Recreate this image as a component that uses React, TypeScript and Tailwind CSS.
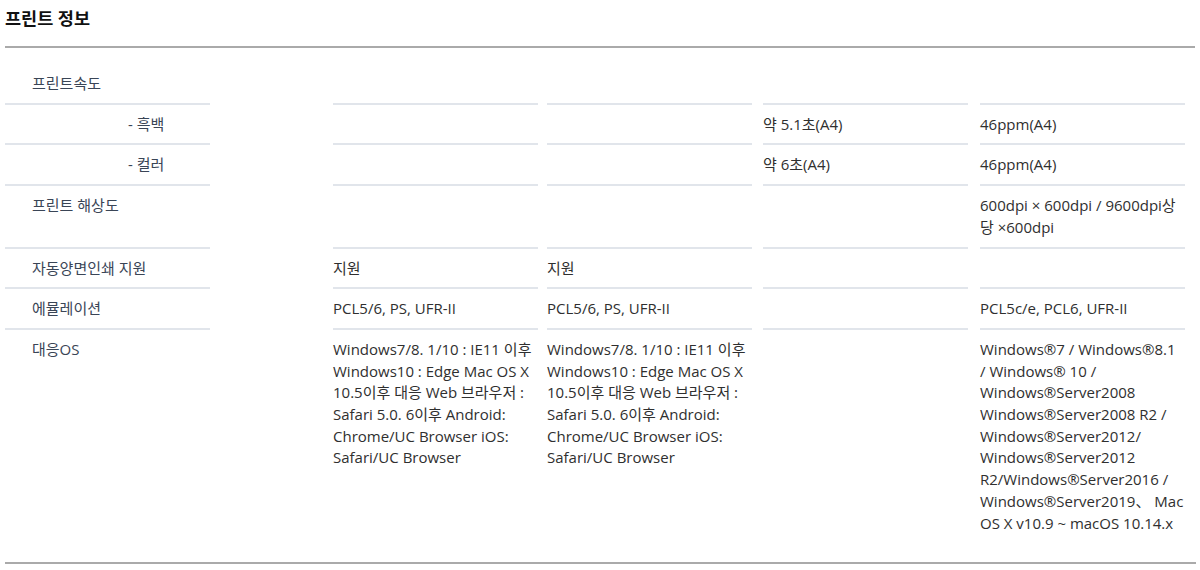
import React from "react";

const grid =
  "grid grid-cols-[205px_123px_205px_9px_205px_11px_205px_12px_205px]";

type Row = {
  label: string;
  sub?: boolean;
  cells: (string | string[])[];
  last?: boolean;
};

const osText =
  "Windows7/8. 1/10 : IE11 이후 Windows10 : Edge Mac OS X 10.5이후 대응 Web 브라우저 : Safari 5.0. 6이후 Android: Chrome/UC Browser iOS: Safari/UC Browser";

const rows: Row[] = [
  { label: "프린트속도", cells: ["", "", "", ""] },
  { label: "- 흑백", sub: true, cells: ["", "", "약 5.1초(A4)", "46ppm(A4)"] },
  { label: "- 컬러", sub: true, cells: ["", "", "약 6초(A4)", "46ppm(A4)"] },
  {
    label: "프린트 해상도",
    cells: ["", "", "", ["600dpi × 600dpi / 9600dpi상", "당 ×600dpi"]],
  },
  { label: "자동양면인쇄 지원", cells: ["지원", "지원", "", ""] },
  {
    label: "에뮬레이션",
    cells: ["PCL5/6, PS, UFR-II", "PCL5/6, PS, UFR-II", "", "PCL5c/e, PCL6, UFR-II"],
  },
  {
    label: "대응OS",
    last: true,
    cells: [
      osText,
      osText,
      "",
      [
        "Windows®7 / Windows®8.1",
        "/ Windows® 10 /",
        "Windows®Server2008",
        "Windows®Server2008 R2 /",
        "Windows®Server2012/",
        "Windows®Server2012",
        "R2/Windows®Server2016 /",
        "Windows®Server2019、 Mac",
        "OS X v10.9 ~ macOS 10.14.x",
      ],
    ],
  },
];

const colStart = ["col-start-3", "col-start-5", "col-start-7", "col-start-9"];

export default function App() {
  return (
    <div
      className="w-[1200px] h-[570px] bg-white px-[5px] text-[15px] text-[#2f2f2f]"
      style={{ fontFamily: '"Open Sans", "Noto Sans CJK KR", sans-serif' }}
    >
      <h2 className="pt-[6px] text-[17.5px] leading-[24px] font-bold text-[#111]">
        프린트 정보
      </h2>
      <div className="mt-[16px] h-[2px] w-[1190px] bg-[#aaaaaa]" />
      <div className="mt-[16px]">
        {rows.map((r, i) => {
          const border = r.last ? "" : "border-b-2 border-[#e1e5eb]";
          return (
            <div key={i} className={grid}>
              <div
                className={`col-start-1 ${border} pt-[9px] pb-[8px] leading-[21.7px] text-[#3a4556] ${
                  r.sub ? "pl-[123px]" : "pl-[27px]"
                }`}
              >
                {r.label}
              </div>
              {r.cells.map((c, j) => (
                <div
                  key={j}
                  className={`${colStart[j]} ${border} pt-[9px] pb-[8px] leading-[21.7px] break-words`}
                >
                  {Array.isArray(c)
                    ? c.map((l, k) => (
                        <div key={k} className="whitespace-nowrap">
                          {l}
                        </div>
                      ))
                    : c}
                </div>
              ))}
            </div>
          );
        })}
      </div>
      <div className="mt-[20px] h-[2px] w-[1191px] bg-[#aaaaaa]" />
    </div>
  );
}
